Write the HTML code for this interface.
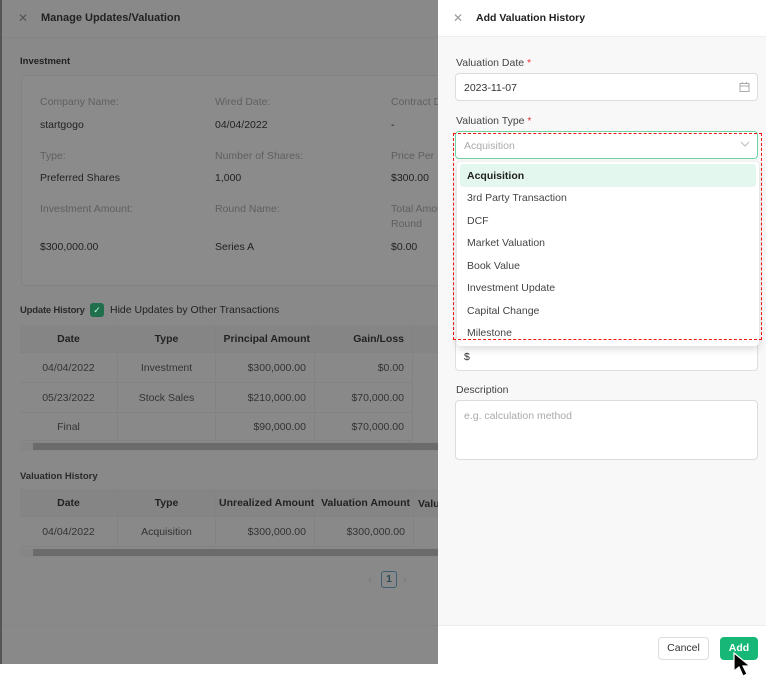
<!DOCTYPE html>
<html><head><style>
*{box-sizing:border-box;margin:0;padding:0}
body{width:766px;height:682px;background:#fff;font-family:"Liberation Sans",sans-serif;font-size:10.5px;color:#222;position:relative;overflow:hidden}
.a{position:absolute;white-space:nowrap}
#left{position:absolute;left:0;top:0;width:438px;height:664px;background:#898989;border-left:2px solid #555;overflow:hidden}
.lbl{color:#5f5f5f}
.cell{position:absolute;height:30px;line-height:30px;border-right:1px solid #838383;border-bottom:1px solid #838383;padding:0 8px;white-space:nowrap;overflow:hidden}
#right{position:absolute;left:438px;top:0;width:328px;height:664px;background:#f8f8f8}
.inp{position:absolute;left:17px;width:303px;background:#fff;border:1px solid #dcdcdc;border-radius:4px}
.opt{position:absolute;left:29px;font-size:10.5px;color:#444}
</style></head><body>
<div id="left">
 <div class="a" style="left:16px;top:11px;font-size:12px;color:#555">✕</div>
 <div class="a" style="left:39px;top:12px;font-size:11px;font-weight:bold;color:#222">Manage Updates/Valuation</div>
 <div class="a" style="left:0;top:37px;width:436px;height:1px;background:#848484"></div>
 <div class="a" style="left:18px;top:56px;font-size:9.5px;font-weight:bold">Investment</div>
 <div class="a" style="left:19px;top:75px;width:430px;height:211px;border:1px solid #828282;border-radius:5px;background:#8b8b8b"></div>
 <div class="a lbl" style="left:38px;top:96px">Company Name:</div>
 <div class="a lbl" style="left:213px;top:96px">Wired Date:</div>
 <div class="a lbl" style="left:389px;top:96px">Contract D</div>
 <div class="a" style="left:38px;top:119px">startgogo</div>
 <div class="a" style="left:213px;top:119px">04/04/2022</div>
 <div class="a" style="left:389px;top:119px">-</div>
 <div class="a lbl" style="left:38px;top:150px">Type:</div>
 <div class="a lbl" style="left:213px;top:150px">Number of Shares:</div>
 <div class="a lbl" style="left:389px;top:150px">Price Per S</div>
 <div class="a" style="left:38px;top:172px">Preferred Shares</div>
 <div class="a" style="left:213px;top:172px">1,000</div>
 <div class="a" style="left:389px;top:172px">$300.00</div>
 <div class="a lbl" style="left:38px;top:203px">Investment Amount:</div>
 <div class="a lbl" style="left:213px;top:203px">Round Name:</div>
 <div class="a lbl" style="left:389px;top:203px">Total Amou</div>
 <div class="a lbl" style="left:389px;top:218px">Round</div>
 <div class="a" style="left:38px;top:241px">$300,000.00</div>
 <div class="a" style="left:213px;top:241px">Series A</div>
 <div class="a" style="left:389px;top:241px">$0.00</div>

 <div class="a" style="left:18px;top:305px;font-size:9.5px;font-weight:bold;color:#2a2a2a;letter-spacing:-0.2px">Update History</div>
 <div class="a" style="left:88px;top:303px;width:14px;height:14px;background:#1f6e4c;border-radius:3px;color:#bfe;font-size:9px;text-align:center;line-height:14px">✓</div>
 <div class="a" style="left:108px;top:304px;font-size:10.5px">Hide Updates by Other Transactions</div>

 <div class="a" style="left:18px;top:325px;width:420px;height:28px;background:#858585"></div>
 <div class="cell" style="left:18px;top:325px;width:98px;height:28px;line-height:28px;text-align:center;font-weight:bold">Date</div>
 <div class="cell" style="left:116px;top:325px;width:98px;height:28px;line-height:28px;text-align:center;font-weight:bold">Type</div>
 <div class="cell" style="left:214px;top:325px;width:99px;height:28px;line-height:28px;text-align:right;font-weight:bold;padding:0 4px">Principal Amount</div>
 <div class="cell" style="left:313px;top:325px;width:98px;height:28px;line-height:28px;text-align:right;font-weight:bold">Gain/Loss</div>
 <div class="cell" style="left:18px;top:353px;width:98px;text-align:center;color:#333">04/04/2022</div>
 <div class="cell" style="left:116px;top:353px;width:98px;text-align:center;color:#333">Investment</div>
 <div class="cell" style="left:214px;top:353px;width:99px;text-align:right;color:#333">$300,000.00</div>
 <div class="cell" style="left:313px;top:353px;width:98px;text-align:right;color:#333">$0.00</div>
 <div class="cell" style="left:18px;top:383px;width:98px;text-align:center;color:#333">05/23/2022</div>
 <div class="cell" style="left:116px;top:383px;width:98px;text-align:center;color:#333">Stock Sales</div>
 <div class="cell" style="left:214px;top:383px;width:99px;text-align:right;color:#333">$210,000.00</div>
 <div class="cell" style="left:313px;top:383px;width:98px;text-align:right;color:#333">$70,000.00</div>
 <div class="cell" style="left:18px;top:413px;width:98px;height:28px;line-height:28px;text-align:center;color:#333">Final</div>
 <div class="cell" style="left:116px;top:413px;width:98px;height:28px"></div>
 <div class="cell" style="left:214px;top:413px;width:99px;height:28px;line-height:28px;text-align:right;color:#333">$90,000.00</div>
 <div class="cell" style="left:313px;top:413px;width:98px;height:28px;line-height:28px;text-align:right;color:#333">$70,000.00</div>
 <div class="a" style="left:18px;top:442px;width:420px;height:9px;background:#868686"></div>
 <div class="a" style="left:31px;top:443px;width:407px;height:7px;background:#6b6b6b"></div>

 <div class="a" style="left:18px;top:471px;font-size:9.5px;font-weight:bold;color:#2a2a2a">Valuation History</div>
 <div class="a" style="left:18px;top:489px;width:420px;height:28px;background:#858585"></div>
 <div class="cell" style="left:18px;top:489px;width:98px;height:28px;line-height:28px;text-align:center;font-weight:bold">Date</div>
 <div class="cell" style="left:116px;top:489px;width:98px;height:28px;line-height:28px;text-align:center;font-weight:bold">Type</div>
 <div class="cell" style="left:214px;top:489px;width:99px;height:28px;line-height:28px;text-align:right;font-weight:bold;padding:0 3px">Unrealized Amount</div>
 <div class="cell" style="left:313px;top:489px;width:99px;height:28px;line-height:28px;text-align:right;font-weight:bold;padding:0 3px">Valuation Amount</div>
 <div class="a" style="left:416px;top:498px;font-weight:bold">Valu</div>
 <div class="cell" style="left:18px;top:517px;width:98px;text-align:center;color:#333">04/04/2022</div>
 <div class="cell" style="left:116px;top:517px;width:98px;text-align:center;color:#333">Acquisition</div>
 <div class="cell" style="left:214px;top:517px;width:99px;text-align:right;color:#333">$300,000.00</div>
 <div class="cell" style="left:313px;top:517px;width:99px;text-align:right;color:#333">$300,000.00</div>
 <div class="a" style="left:18px;top:548px;width:420px;height:9px;background:#868686"></div>
 <div class="a" style="left:31px;top:549px;width:407px;height:7px;background:#6b6b6b"></div>

 <div class="a" style="left:366px;top:572px;color:#777;font-size:12px">‹</div>
 <div class="a" style="left:379px;top:571px;width:16px;height:17px;border:1px solid #3f5f70;border-radius:3px;text-align:center;line-height:15px;font-weight:bold;color:#2f4a58">1</div>
 <div class="a" style="left:401px;top:572px;color:#777;font-size:12px">›</div>
 <div class="a" style="left:0;top:625px;width:436px;height:1px;background:#858585"></div>
</div>

<div id="right">
 <div class="a" style="left:0;top:0;width:328px;height:37px;background:#fff;border-bottom:1px solid #eee"></div>
 <div class="a" style="left:15px;top:11px;font-size:12px;color:#999">✕</div>
 <div class="a" style="left:38px;top:12px;font-size:10.5px;font-weight:bold">Add Valuation History</div>
 <div class="a" style="left:18px;top:57px;color:#444">Valuation Date<span style="color:#e33"> *</span></div>
 <div class="inp" style="top:73px;height:28px"></div>
 <div class="a" style="left:26px;top:82px;color:#333">2023-11-07</div>
 <svg class="a" style="left:301px;top:82px" width="11" height="10" viewBox="0 0 11 10"><rect x="1" y="1.5" width="9" height="8" fill="none" stroke="#aaa"/><line x1="1" y1="4" x2="10" y2="4" stroke="#aaa"/><line x1="3.5" y1="0" x2="3.5" y2="2" stroke="#aaa"/><line x1="7.5" y1="0" x2="7.5" y2="2" stroke="#aaa"/></svg>
 <div class="a" style="left:18px;top:115px;color:#444">Valuation Type<span style="color:#e33"> *</span></div>
 <div class="inp" style="top:131px;height:28px;border-color:#6fd3a5"></div>
 <div class="a" style="left:26px;top:140px;color:#aaa">Acquisition</div>
 <svg class="a" style="left:302px;top:141px" width="10" height="7" viewBox="0 0 10 7"><path d="M1 1 L5 5 L9 1" fill="none" stroke="#bbb"/></svg>
 <div class="inp" style="top:336px;height:35px;border-color:#e0e0e0"></div>
 <div class="a" style="left:26px;top:351px;color:#333">$</div>
 <div class="a" style="left:19px;top:162px;width:302px;height:184px;background:#fff;border-radius:4px;box-shadow:0 3px 8px rgba(0,0,0,.15)"></div>
 <div class="a" style="left:22px;top:164px;width:296px;height:23px;background:#e3f7ee;border-radius:3px"></div>
 <div class="opt" style="top:170px;font-weight:bold;color:#222">Acquisition</div>
 <div class="opt" style="top:192px">3rd Party Transaction</div>
 <div class="opt" style="top:215px">DCF</div>
 <div class="opt" style="top:237px">Market Valuation</div>
 <div class="opt" style="top:260px">Book Value</div>
 <div class="opt" style="top:282px">Investment Update</div>
 <div class="opt" style="top:305px">Capital Change</div>
 <div class="opt" style="top:327px">Milestone</div>
 <div class="a" style="left:15px;top:133px;width:309px;height:207px;border:1px dashed #ee1111"></div>
 <div class="a" style="left:18px;top:384px;color:#444">Description</div>
 <div class="inp" style="top:400px;height:60px"></div>
 <div class="a" style="left:26px;top:410px;color:#aaa">e.g. calculation method</div>
 <div class="a" style="left:0;top:625px;width:328px;height:57px;background:#fff;border-top:1px solid #eee"></div>
 <div class="a" style="left:220px;top:637px;width:51px;height:23px;border:1px solid #ddd;border-radius:4px;background:#fff;text-align:center;line-height:21px;color:#333">Cancel</div>
 <div class="a" style="left:282px;top:637px;width:38px;height:23px;border-radius:4px;background:#17b877;text-align:center;line-height:23px;color:#fff;font-weight:bold">Add</div>
 <svg class="a" style="left:294px;top:652px" width="22" height="26" viewBox="0 0 22 26"><path d="M2 1 L2 19 L7 15 L11 24 L15 22 L11 14 L18 14 Z" fill="#000" stroke="#fff" stroke-width="1.2"/></svg>
</div>
</body></html>
